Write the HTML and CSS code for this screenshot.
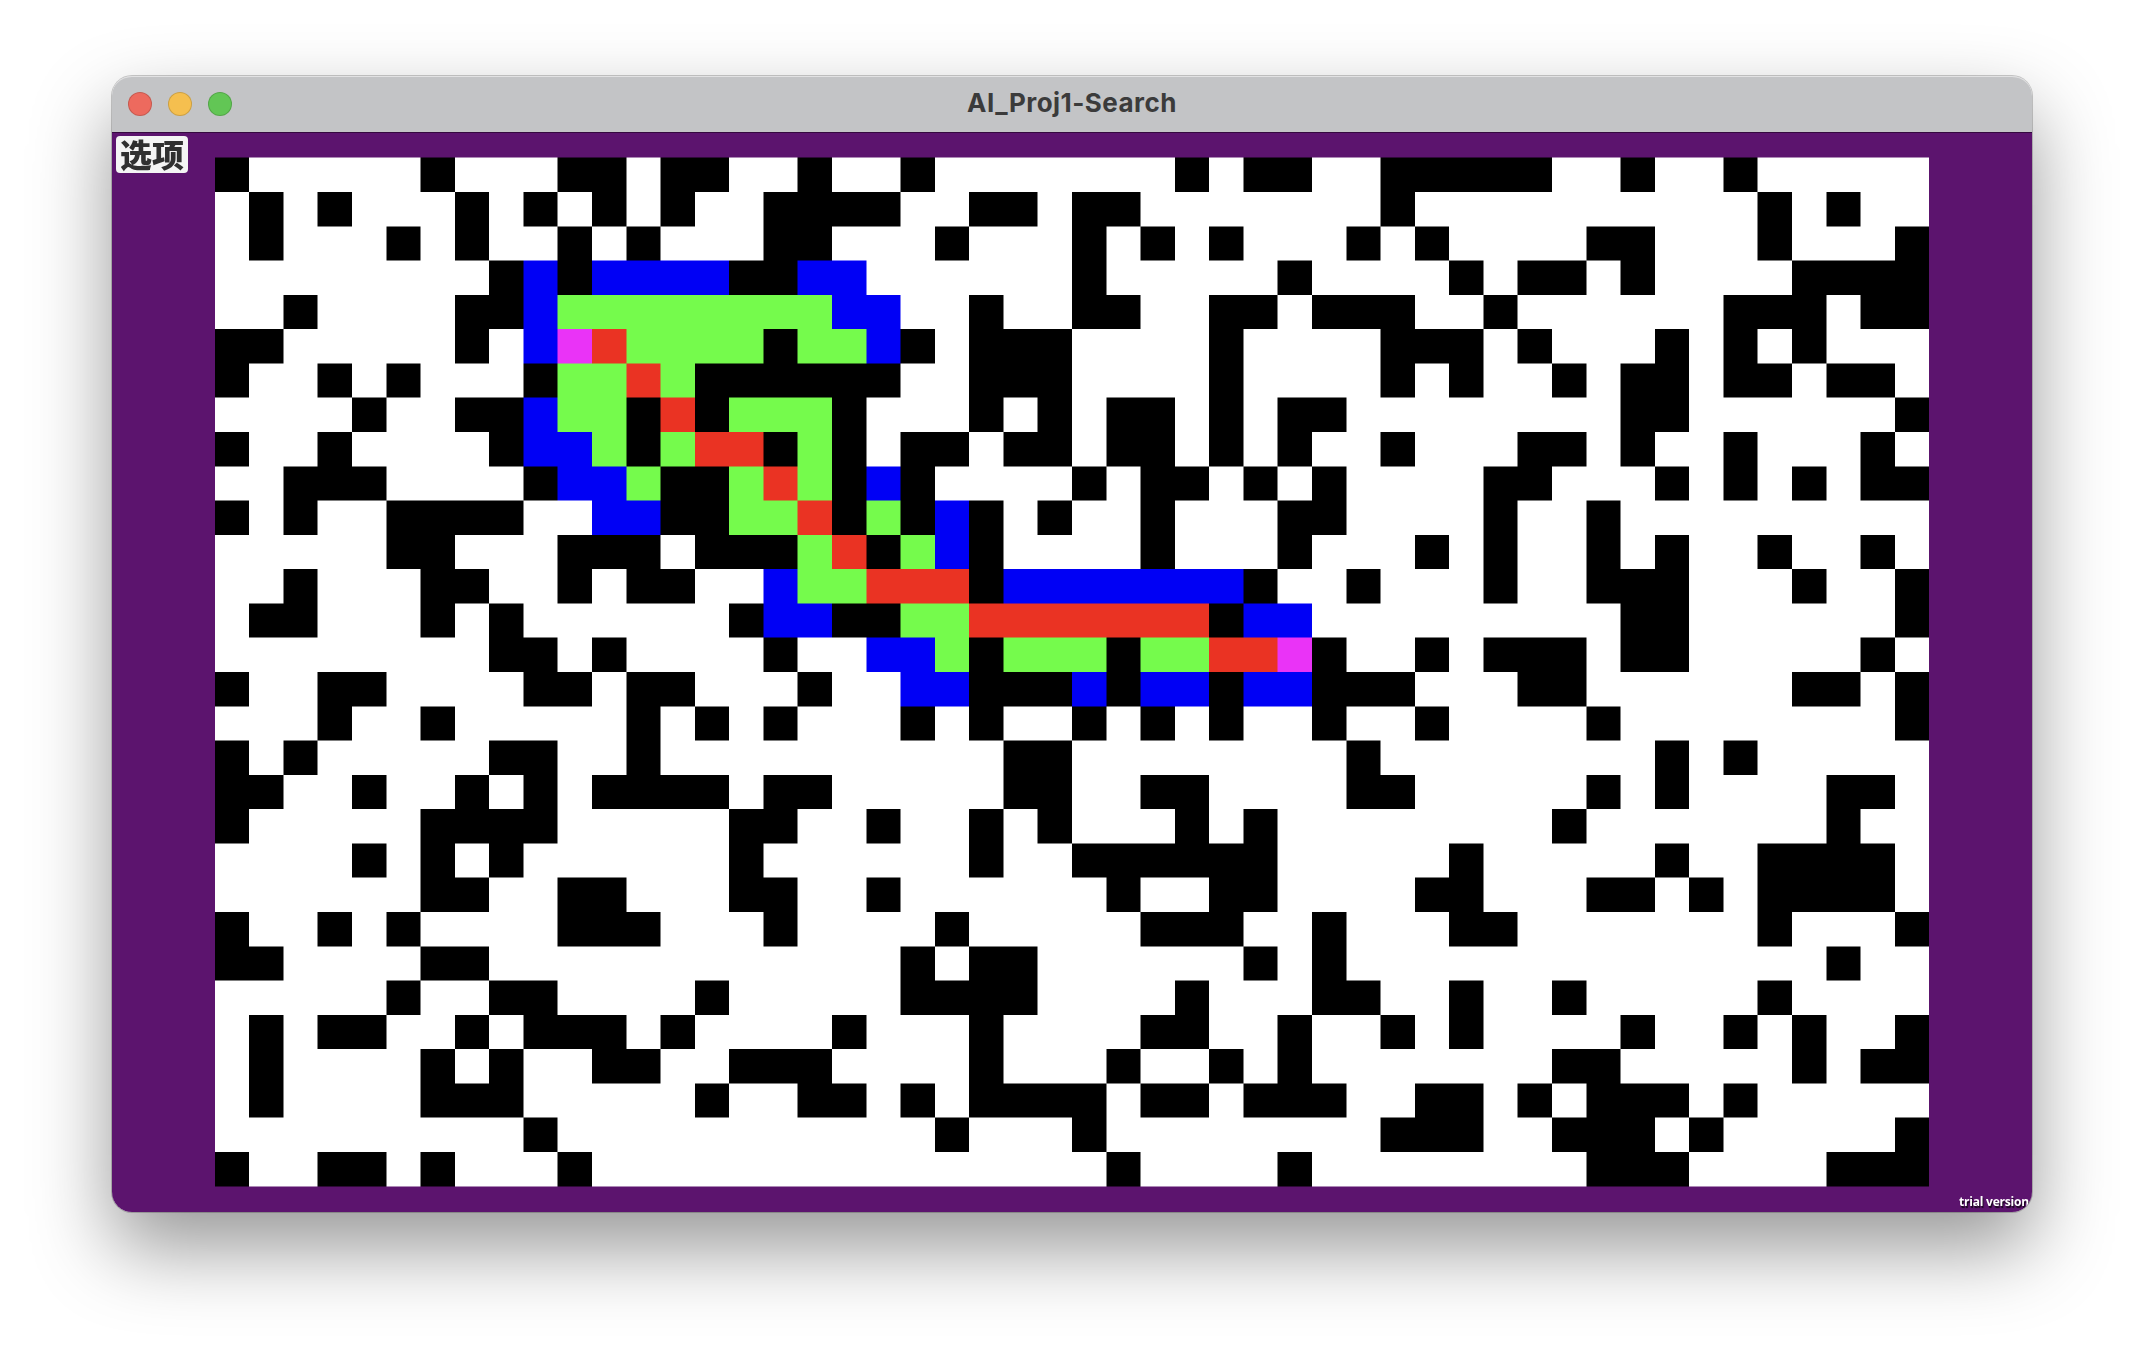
FILE: index.html
```html
<!DOCTYPE html>
<html lang="zh-CN">
<head>
<meta charset="utf-8">
<title>AI_Proj1-Search</title>
<link rel="stylesheet" href="styles.css">
</head>
<body>
<main class="window">
  <header class="titlebar">
    <div class="lights">
      <span class="light light-close"></span>
      <span class="light light-minimize"></span>
      <span class="light light-zoom"></span>
    </div>
    <h1 class="title">AI_Proj1-Search</h1>
  </header>
  <section class="stage">
    <canvas class="board" id="board" width="3840" height="2160"></canvas>
    <button class="options" type="button">选项</button>
    <span class="trial">trial version</span>
  </section>
</main>
<script src="board.js"></script>
</body>
</html>
```
FILE: styles.css
```css
* {
  box-sizing: border-box;
}

body {
  margin: 0;
  height: 1360px;
  padding: 76px 112px 0;
  background: #fff;
  overflow: hidden;
  font-family: Inter, "Liberation Sans", sans-serif;
}

.window {
  width: 1920px;
  height: 1136px;
  display: flex;
  flex-direction: column;
  border-radius: 20px;
  box-shadow: 0 0 0 1px rgba(0, 0, 0, 0.2), 0 36px 80px rgba(0, 0, 0, 0.41);
}

.titlebar {
  height: 56px;
  flex: none;
  display: grid;
  grid-template-columns: 1fr auto 1fr;
  align-items: center;
  padding: 0 16px;
  border-radius: 20px 20px 0 0;
  background: #c3c4c6;
  box-shadow: inset 0 2px 0 -1px #e2e2e3;
}

.lights {
  display: flex;
  gap: 16px;
}

.light {
  width: 24px;
  height: 24px;
  border-radius: 50%;
  border: 1px solid rgba(0, 0, 0, 0.16);
}

.light-close { background: #ed6a5e; }
.light-minimize { background: #f5bf4f; }
.light-zoom { background: #62c655; }

.title {
  margin: 0;
  padding-bottom: 2px;
  font-size: 26px;
  line-height: 32px;
  font-weight: 700;
  letter-spacing: 0.46px;
  color: #3b3b3b;
}

.stage {
  position: relative;
  flex: 1;
  overflow: hidden;
  border-radius: 0 0 20px 20px;
  background: #5c146e;
  box-shadow: inset 0 1px 0 #35093f;
}

.board {
  display: block;
  width: 1920px;
  height: 1080px;
}

.options {
  position: absolute;
  left: 4px;
  top: 4px;
  width: 72px;
  height: 37px;
  padding: 0 0 3px;
  border: 0;
  border-radius: 4px;
  background: #f4f4f4;
  color: #303030;
  font: 900 32px/34px "Noto Sans CJK SC", sans-serif;
}

.trial {
  position: absolute;
  right: 3px;
  bottom: 2px;
  font: 700 12px/16px "Open Sans", sans-serif;
  letter-spacing: -0.2px;
  color: #fff;
  text-shadow: 1px 2px 1px rgba(0, 0, 0, 0.75);
}
```
FILE: board.js
```js
const COLORS = { k: '#000000', b: '#0000f5', g: '#75fb4c', r: '#ea3323', m: '#ea33f7' };
const HALF = 25;

// One entry per row: [columns 0-24, columns 25-49]. A single number is one
// cell, "a-b" covers cells a up to but not including b.
const ROWS = [
  ['k 0 6 10-12 13-15 17 20', 'k 3 5-7 9-14 16 19'],
  ['k 1 3 7 9 11 13 16-20 22-24', 'k 0-2 9 20 22'],
  ['k 1 5 7 10 12 16-18 21', 'k 0 2 4 8 10 15-17 20 24'],
  ['k 8 10 15-17 b 9 11-15 17-19', 'k 0 6 11 13-15 16 21-25'],
  ['k 2 7-9 22 b 9 18-20 g 10-18', 'k 0-2 4-6 7-10 12 19-22 23-25'],
  ['k 0-2 7 16 20 22-25 b 9 19 m 10 r 11 g 12-16 17-19', 'k 4 9-12 13 17 19 21'],
  ['k 0 3 5 9 14-20 22-25 g 10-12 13 r 12', 'k 4 9 11 14 16-18 19-21 22-24'],
  ['k 4 7-9 12 14 18 22 24 b 9 g 10-12 15-18 r 13', 'k 1-3 4 6-8 16-18 24'],
  ['k 0 3 8 12 16 18 20-22 23-25 b 9-11 g 11 13 17 r 14-16', 'k 1-3 4 6 9 13-15 16 19 23'],
  ['k 2-5 9 13-15 18 20 b 10-12 19 g 12 15 17 r 16', 'k 0 2-4 5 7 12-14 17 19 21 23-25'],
  ['k 0 2 5-9 13-15 18 20 22 24 b 11-13 21 g 15-17 19 r 17', 'k 2 6-8 12 15'],
  ['k 5-7 10-13 14-17 19 22 g 17 20 r 18 b 21', 'k 2 6 10 12 15 17 20 23'],
  ['k 2 6-8 10 12-14 22 b 16 23-25 g 17-19 r 19-22', 'b 0-5 k 5 8 12 15-18 21 24'],
  ['k 1-3 6 8 15 18-20 b 16-18 g 20-22 r 22-25', 'r 0-4 b 5-7 k 4 16-18 24'],
  ['k 8-10 11 16 22 b 19-21 g 21 23-25', 'g 0 2-4 r 4-6 m 6 k 1 7 10 12-15 16-18 23'],
  ['k 0 3-5 9-11 12-14 17 22-25 b 20-22', 'b 0 2-4 5-7 k 1 4 7-10 13-15 21-23 24'],
  ['k 3 6 12 14 16 20 22', 'k 0 2 4 7 10 15 24'],
  ['k 0 2 8-10 12 23-25', 'k 8 17 19'],
  ['k 0-2 4 7 9 11-15 16-18 23-25', 'k 2-4 8-10 15 17 22-24'],
  ['k 0 6-10 15-17 19 22 24', 'k 3 5 14 22'],
  ['k 4 6 8 15 22', 'k 0-6 11 17 20-24'],
  ['k 6-8 10-12 15-17 19', 'k 1 4-6 10-12 15-17 18 20-24'],
  ['k 0 3 5 10-13 16 21', 'k 2-5 7 11-13 20 24'],
  ['k 0-2 6-8 20 22-24', 'k 5 7 22'],
  ['k 5 8-10 14 20-24', 'k 3 7-9 11 14 20'],
  ['k 1 3-5 7 9-12 13 18 22', 'k 2-4 6 9 11 16 19 21 24'],
  ['k 1 6 8 11-13 15-18 22', 'k 1 4 6 14-16 21 23-25'],
  ['k 1 6-9 14 17-19 20 22-25', 'k 0 2-4 5-8 10-12 13 15-18 19'],
  ['k 9 21', 'k 0 9-12 14-17 18 24'],
  ['k 0 3-5 6 10', 'k 1 6 15-18 22-25'],
];

const canvas = document.getElementById('board');
const ctx = canvas.getContext('2d');
const cell = 480 / 7;
const originX = (canvas.width - HALF * 2 * cell) / 2;
const originY = (canvas.height - ROWS.length * cell) / 2;
const edgeX = (i) => Math.round(originX + i * cell);
const edgeY = (i) => Math.round(originY + i * cell);

function fill(color, from, to, top, bottom) {
  ctx.fillStyle = color;
  ctx.fillRect(edgeX(from), edgeY(top), edgeX(to) - edgeX(from), edgeY(bottom) - edgeY(top));
}

fill('#ffffff', 0, HALF * 2, 0, ROWS.length);
ROWS.forEach((halves, row) => {
  halves.forEach((runs, side) => {
    let color = COLORS.k;
    runs.split(' ').forEach((token) => {
      if (COLORS[token]) {
        color = COLORS[token];
        return;
      }
      const [start, end] = token.split('-').map(Number);
      const offset = side * HALF;
      fill(color, offset + start, offset + (end || start + 1), row, row + 1);
    });
  });
});
```
